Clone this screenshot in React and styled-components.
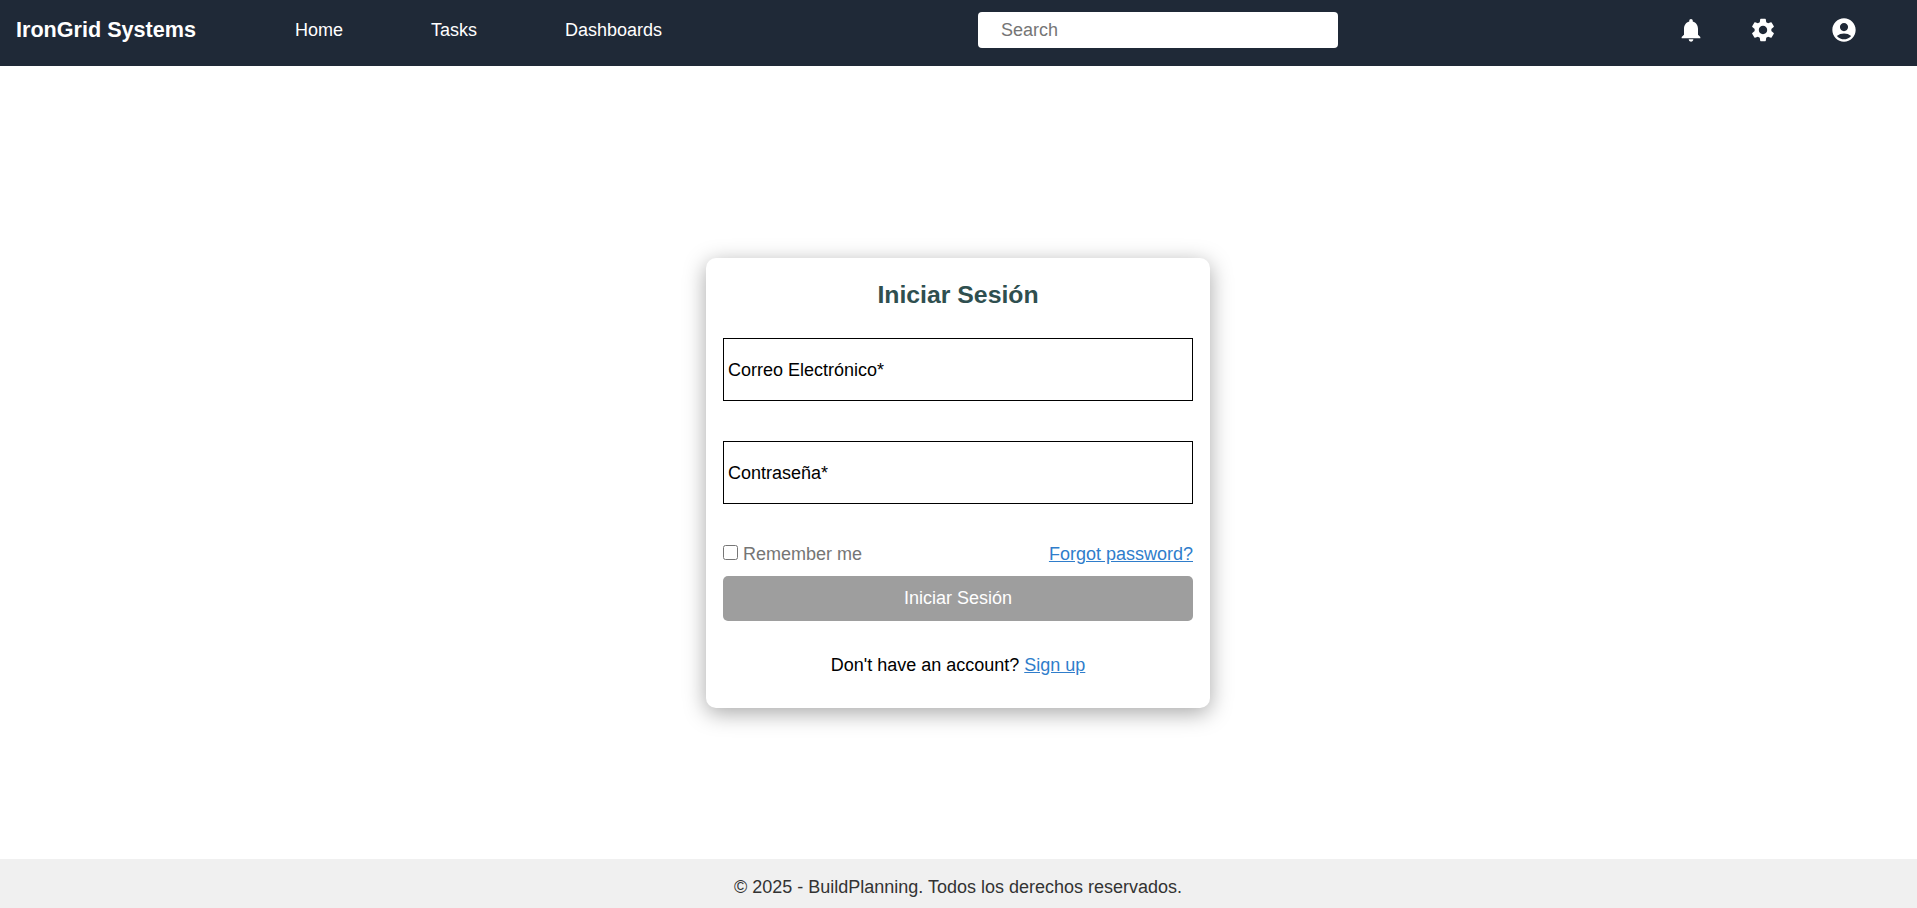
import React from "react";
import styled, { createGlobalStyle } from "styled-components";
import { MdNotifications, MdSettings, MdAccountCircle } from "react-icons/md";

const Global = createGlobalStyle`
  html, body { margin: 0; padding: 0; background: #fff; font-family: "Liberation Sans", Arial, sans-serif; }
  * { box-sizing: border-box; }
`;
const Page = styled.div`
  height: 908px;
  display: flex;
  flex-direction: column;
`;
const Header = styled.header`
  height: 66px;
  flex: none;
  padding-bottom: 6px;
  background: #1f2937;
  color: #fff;
  display: grid;
  grid-template-columns: 978px 360px 1fr;
  align-items: center;
`;
const LeftGroup = styled.div`
  display: flex;
  align-items: center;
  padding-left: 16px;
`;
const Brand = styled.div`
  font-size: 21.6px;
  font-weight: 700;
  width: 279px;
`;
const NavLink = styled.a`
  font-size: 18px;
  color: #fff;
  width: ${p => p.$w}px;
`;
const Search = styled.input`
  width: 360px;
  height: 36px;
  border: none;
  border-radius: 4px;
  background: #fff;
  padding: 0 23px;
  font: 18px "Liberation Sans", Arial, sans-serif;
  &::placeholder { color: #757575; opacity: 1; }
`;
const IconGroup = styled.div`
  display: flex;
  align-items: center;
  padding-left: 339px;
`;
const IconSlot = styled.span`
  display: flex;
  width: ${p => p.$w}px;
  font-size: 28px;
  color: #fff;
`;
const Main = styled.main`
  flex: 1;
  padding: 41px 1px 0 0;
  display: flex;
  align-items: center;
  justify-content: center;
`;
const Card = styled.form`
  width: 504px;
  height: 450px;
  padding: 17px;
  background: #fff;
  border-radius: 10px;
  box-shadow: 0 5px 22px rgba(0, 0, 0, 0.35);
  display: flex;
  flex-direction: column;
`;
const Title = styled.h2`
  margin: 4px 0 0;
  height: 31px;
  font-size: 24.8px;
  line-height: 31px;
  font-weight: 700;
  text-align: center;
  color: #2f4f4f;
`;
const Field = styled.div`
  height: 63px;
  margin-top: ${p => p.$mt}px;
  border: 1px solid #000;
  padding: 1px 0 0 4px;
  display: flex;
  align-items: center;
  font-size: 18px;
  color: #000;
`;
const OptionsRow = styled.div`
  margin-top: 39px;
  height: 22px;
  display: flex;
  align-items: center;
  justify-content: space-between;
  font-size: 18px;
`;
const Remember = styled.label`
  display: flex;
  align-items: center;
  color: #757575;
`;
const Check = styled.input`
  width: 15px;
  height: 15px;
  margin: 0 5px 4px 0;
`;
const TextLink = styled.a`
  color: #2f7dcb;
  text-decoration: underline;
`;
const Submit = styled.button`
  margin-top: 11px;
  height: 45px;
  border: none;
  border-radius: 5px;
  background: #9e9e9e;
  color: #fff;
  font: 18px "Liberation Sans", Arial, sans-serif;
`;
const SignUp = styled.p`
  margin: 34px 0 0;
  text-align: center;
  font-size: 18px;
  color: #000;
`;
const Footer = styled.footer`
  height: 49px;
  flex: none;
  padding: 8px 1px 0 0;
  background: #f0f0f0;
  color: #333;
  display: flex;
  align-items: center;
  justify-content: center;
  font-size: 18px;
`;

export default function App() {
  return (
    <>
      <Global />
      <Page>
        <Header>
          <LeftGroup>
            <Brand>IronGrid Systems</Brand>
            <NavLink $w={136}>Home</NavLink>
            <NavLink $w={134}>Tasks</NavLink>
            <NavLink $w={110}>Dashboards</NavLink>
          </LeftGroup>
          <Search placeholder="Search" />
          <IconGroup>
            <IconSlot $w={72}><MdNotifications /></IconSlot>
            <IconSlot $w={81}><MdSettings /></IconSlot>
            <IconSlot $w={28}><MdAccountCircle /></IconSlot>
          </IconGroup>
        </Header>
        <Main>
          <Card>
            <Title>Iniciar Sesión</Title>
            <Field $mt={28}>Correo Electrónico*</Field>
            <Field $mt={40}>Contraseña*</Field>
            <OptionsRow>
              <Remember><Check type="checkbox" />Remember me</Remember>
              <TextLink>Forgot password?</TextLink>
            </OptionsRow>
            <Submit type="button">Iniciar Sesión</Submit>
            <SignUp>Don't have an account? <TextLink>Sign up</TextLink></SignUp>
          </Card>
        </Main>
        <Footer>© 2025 - BuildPlanning. Todos los derechos reservados.</Footer>
      </Page>
    </>
  );
}
